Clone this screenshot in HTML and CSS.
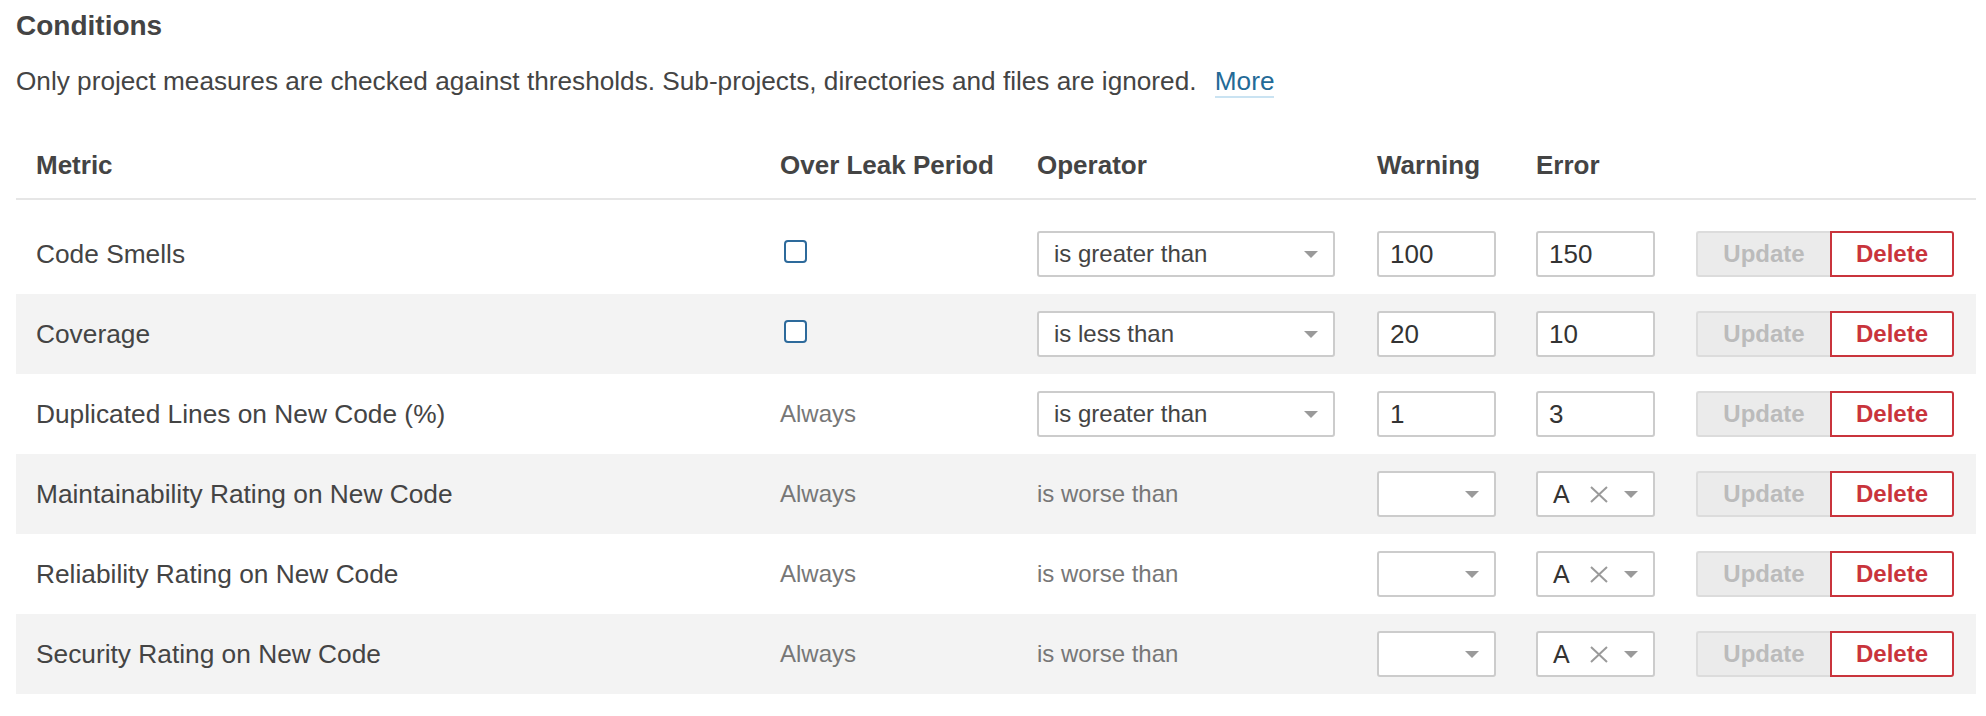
FILE: index.html
```html
<!DOCTYPE html>
<html>
  <head>
    <meta charset="UTF-8" />
    <meta name="viewport" content="width=device-width, initial-scale=1.0" />
    <title>Quality Gate Conditions</title>
    <link rel="stylesheet" href="styles.css">
  </head>
  <body>
    <div class="page">
      <h3 class="title">Conditions</h3>
      <p class="intro">
        Only project measures are checked against thresholds. Sub-projects, directories and files are ignored.
        <a class="more" href="#">More</a>
      </p>

      <div class="conditions">
        <div class="row head">
          <div>Metric</div>
          <div>Over Leak Period</div>
          <div>Operator</div>
          <div>Warning</div>
          <div>Error</div>
          <div></div>
        </div>

        <div class="rows">
          <div class="row">
            <div class="metric">Code Smells</div>
            <div><span class="checkbox"></span></div>
            <div><div class="select op"><span>is greater than</span><span class="arrow"></span></div></div>
            <div><input class="field" type="text" value="100" /></div>
            <div><input class="field" type="text" value="150" /></div>
            <div class="actions"><button class="btn update">Update</button><button class="btn delete">Delete</button></div>
          </div>

          <div class="row">
            <div class="metric">Coverage</div>
            <div><span class="checkbox"></span></div>
            <div><div class="select op"><span>is less than</span><span class="arrow"></span></div></div>
            <div><input class="field" type="text" value="20" /></div>
            <div><input class="field" type="text" value="10" /></div>
            <div class="actions"><button class="btn update">Update</button><button class="btn delete">Delete</button></div>
          </div>

          <div class="row">
            <div class="metric">Duplicated Lines on New Code (%)</div>
            <div class="muted">Always</div>
            <div><div class="select op"><span>is greater than</span><span class="arrow"></span></div></div>
            <div><input class="field" type="text" value="1" /></div>
            <div><input class="field" type="text" value="3" /></div>
            <div class="actions"><button class="btn update">Update</button><button class="btn delete">Delete</button></div>
          </div>

          <div class="row">
            <div class="metric">Maintainability Rating on New Code</div>
            <div class="muted">Always</div>
            <div class="muted">is worse than</div>
            <div><div class="select rating empty"><span class="arrow"></span></div></div>
            <div>
              <div class="select rating">
                <span class="grade">A</span>
                <svg class="clear" width="18" height="17" viewBox="0 0 18 17"><path d="M1 1 L17 16 M17 1 L1 16" stroke="#9a9a9a" stroke-width="2" fill="none"/></svg>
                <span class="arrow"></span>
              </div>
            </div>
            <div class="actions"><button class="btn update">Update</button><button class="btn delete">Delete</button></div>
          </div>

          <div class="row">
            <div class="metric">Reliability Rating on New Code</div>
            <div class="muted">Always</div>
            <div class="muted">is worse than</div>
            <div><div class="select rating empty"><span class="arrow"></span></div></div>
            <div>
              <div class="select rating">
                <span class="grade">A</span>
                <svg class="clear" width="18" height="17" viewBox="0 0 18 17"><path d="M1 1 L17 16 M17 1 L1 16" stroke="#9a9a9a" stroke-width="2" fill="none"/></svg>
                <span class="arrow"></span>
              </div>
            </div>
            <div class="actions"><button class="btn update">Update</button><button class="btn delete">Delete</button></div>
          </div>

          <div class="row">
            <div class="metric">Security Rating on New Code</div>
            <div class="muted">Always</div>
            <div class="muted">is worse than</div>
            <div><div class="select rating empty"><span class="arrow"></span></div></div>
            <div>
              <div class="select rating">
                <span class="grade">A</span>
                <svg class="clear" width="18" height="17" viewBox="0 0 18 17"><path d="M1 1 L17 16 M17 1 L1 16" stroke="#9a9a9a" stroke-width="2" fill="none"/></svg>
                <span class="arrow"></span>
              </div>
            </div>
            <div class="actions"><button class="btn update">Update</button><button class="btn delete">Delete</button></div>
          </div>
        </div>
      </div>
    </div>
  </body>
</html>
```

FILE: styles.css
```css
body {
  margin: 0;
  font-family: "Liberation Sans", Arial, sans-serif;
  color: #444;
  background-color: white;
}

.page {
  padding: 0 10px 0 16px;
}

.title {
  margin: 10px 0 0;
  font-size: 28px;
  line-height: 32px;
  font-weight: bold;
}

.intro {
  margin: 24px 0 0;
  font-size: 26.2px;
  line-height: 30px;
}

.more {
  margin-left: 11px;
  color: #236a97;
  text-decoration: none;
  border-bottom: 2px solid #cae3f2;
}

/* table */

.row {
  display: grid;
  grid-template-columns: 744px 257px 340px 159px 160px auto;
  align-items: center;
  padding-left: 20px;
  height: 80px;
  font-size: 26px;
  line-height: 30px;
}

.row.head {
  height: auto;
  padding-top: 54px;
  padding-bottom: 18px;
  font-weight: bold;
  border-bottom: 2px solid #e6e6e6;
}

.rows {
  margin-top: 14px;
}

.rows .row:nth-child(even) {
  background-color: #f3f3f3;
}

.metric {
  font-size: 26.3px;
}

.muted {
  font-size: 24px;
  color: #777;
}

.checkbox {
  display: block;
  width: 23px;
  height: 23px;
  margin-left: 4px;
  margin-bottom: 5px;
  box-sizing: border-box;
  border: 2px solid #2d6a9b;
  border-radius: 4px;
  background-color: white;
}

.select {
  display: flex;
  align-items: center;
  justify-content: space-between;
  height: 46px;
  box-sizing: border-box;
  border: 2px solid #ccc;
  border-radius: 3px;
  background-color: white;
  font-size: 24px;
  color: #444;
}

.select.op {
  width: 298px;
  padding: 0 15px;
}

.select.rating {
  width: 119px;
  padding: 0 15px;
}

.select.rating.empty {
  justify-content: flex-end;
}

.grade {
  font-size: 25px;
  color: #333;
}

.clear {
  margin-left: 5px;
}

.arrow {
  width: 0;
  height: 0;
  border-left: 7.5px solid transparent;
  border-right: 7.5px solid transparent;
  border-top: 7px solid #9a9a9a;
}

.field {
  display: block;
  width: 119px;
  height: 46px;
  box-sizing: border-box;
  padding: 0 11px;
  border: 2px solid #ccc;
  border-radius: 3px;
  font-family: "Liberation Sans", Arial, sans-serif;
  font-size: 26px;
  color: #333;
  background-color: white;
}

.actions {
  display: flex;
}

.btn {
  height: 46px;
  box-sizing: border-box;
  padding: 0;
  font-family: "Liberation Sans", Arial, sans-serif;
  font-size: 24px;
  font-weight: bold;
}

.btn.update {
  width: 134px;
  background-color: #ebebeb;
  border: 2px solid #dcdcdc;
  border-right: none;
  border-radius: 3px 0 0 3px;
  color: #bbb;
}

.btn.delete {
  width: 124px;
  background-color: white;
  border: 2px solid #c9343c;
  border-radius: 0 3px 3px 0;
  color: #c9343c;
}
```
